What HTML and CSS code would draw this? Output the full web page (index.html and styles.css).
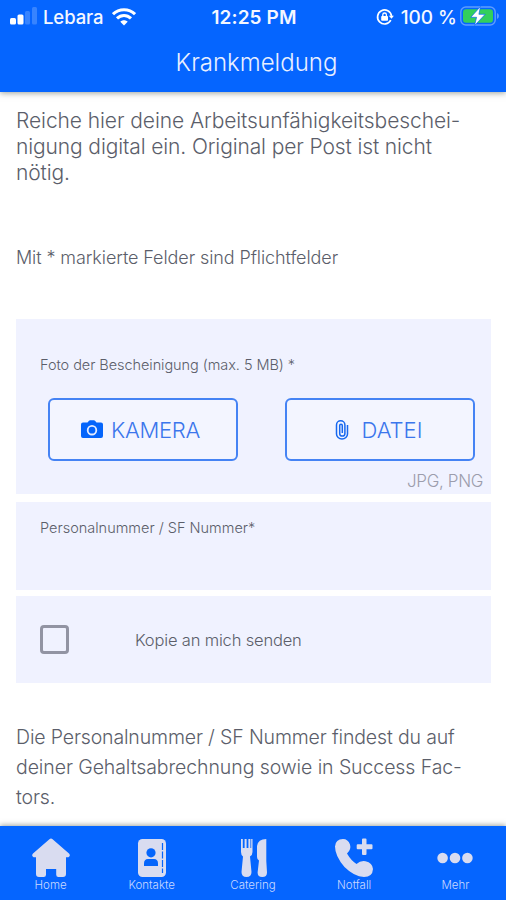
FILE: index.html
```html
<!DOCTYPE html>
<html lang="de">
<head>
<meta charset="utf-8">
<title>Krankmeldung</title>
<link rel="stylesheet" href="styles.css">
</head>
<body>
<div class="app">
  <header class="header">
    <div class="status">
      <div class="status-left">
        <svg class="signal" width="28" height="18" viewBox="0 0 28 18" fill="#fff"><rect x="0" y="11" width="6" height="6.5" rx="1.5"/><rect x="7.5" y="7.5" width="6" height="10" rx="1.5"/><g opacity=".2"><rect x="15" y="4" width="5" height="13.5" rx="1.5"/><rect x="22" y="0" width="5" height="17.5" rx="1.5"/></g></svg>
        <span class="carrier">Lebara</span>
        <svg class="wifi" width="24" height="18" viewBox="0 0 24 18" fill="none" stroke="#fff" stroke-width="3"><path d="M1 6.2C7 .2 17 .2 23 6.2"/><path d="M5 10.4C9 6.5 15 6.5 19 10.4"/><path d="M12 17.6 8.3 13.8C10.3 11.8 13.7 11.8 15.7 13.8Z" fill="#fff" stroke="none"/></svg>
      </div>
      <span class="clock">12:25 PM</span>
      <div class="status-right">
        <svg class="lock" width="18" height="18" viewBox="0 0 18 18" fill="none" stroke="#fff" stroke-width="1.7"><path d="M14.8 12.2A7 7 0 1 1 15.5 8"/><path d="m12.8 7.8 2.7 3 2.4-3Z" fill="#fff" stroke="none"/><rect x="5.2" y="8" width="6.8" height="4.8" rx=".8" fill="#fff" stroke="none"/><path d="M6.8 8V6.8a1.8 1.8 0 0 1 3.6 0V8" stroke-width="1.3"/></svg>
        <span class="percent">100 %</span>
        <svg class="battery" width="39" height="20" viewBox="0 0 39 20"><rect x=".8" y="1" width="34.4" height="18" rx="5" fill="none" stroke="#5e9dff" stroke-width="1.4"/><path d="M37 7v6q2-1 2-3t-2-3Z" fill="#5e9dff"/><rect x="3" y="3.2" width="30" height="13.6" rx="3" fill="#33cf5c"/><path d="M20.5.5 10.8 11.3h5.8L14.6 19.5 25.2 8.3h-6.3Z" fill="#fff" stroke="#0868f8" stroke-width=".7"/></svg>
      </div>
    </div>
    <h1 class="title">Krankmeldung</h1>
  </header>
  <main class="content">
    <p class="intro"><span class="intro-first">Reiche hier deine Arbeitsunfähigkeitsbeschei-</span><span>nigung digital ein. Original per Post ist nicht</span><span>nötig.</span></p>
    <p class="required">Mit * markierte Felder sind Pflichtfelder</p>
    <section class="card upload">
      <p class="label photo-label">Foto der Bescheinigung (max. 5 MB) *</p>
      <div class="buttons">
        <button class="btn camera"><svg width="24" height="20" viewBox="0 0 24 20"><path fill="#0565fb" d="M3 2.6h4.5L9 .7Q9.3.3 10 .3h4q.7 0 1 .4l1.5 1.9H21q2 0 2 2V16q0 2-2 2H3q-2 0-2-2V4.6q0-2 2-2Z"/><circle cx="12" cy="10.2" r="4.3" fill="#0565fb" stroke="#e5ecff" stroke-width="1.8"/></svg><span>KAMERA</span></button>
        <button class="btn file"><svg width="14" height="20" viewBox="0 0 14 20" fill="none" stroke="#1768ef" stroke-width="1.5"><path d="M12.500 5v9a5.500 5 0 0 1-11 0V5a4.200 4.200 0 0 1 8.400 0v8.500a2.600 2.600 0 0 1-5.200 0V5.500a1.300 1.300 0 0 1 2.600 0V13"/></svg><span>DATEI</span></button>
      </div>
      <p class="formats">JPG, PNG</p>
    </section>
    <section class="card number"><p class="label">Personalnummer / SF Nummer*</p></section>
    <section class="card copy"><span class="checkbox"></span><span class="copy-label">Kopie an mich senden</span></section>
    <p class="hint"><span>Die Personalnummer / SF Nummer findest du auf</span><span class="hint-second">deiner Gehaltsabrechnung sowie in Success Fac-</span><span>tors.</span></p>
  </main>
  <nav class="tabs">
    <a class="tab"><svg width="40" height="40" viewBox="0 0 40 40" fill="#d9dcf0"><path d="M18.400 1.200q1.600-1.300 3.200 0L38 15.500q2 2.300-.6 3.800H35V36q0 3-3 3h-4.500q-2.300 0-2.300-2.300V31H15v5.700q0 2.300-2.300 2.300H8q-3 0-3-3V19.300H2.600Q0 17.800 2 15.500Z"/></svg><span>Home</span></a>
    <a class="tab"><svg width="40" height="40" viewBox="0 0 40 40"><rect x="6" y="1" width="28" height="38" rx="4.500" fill="#d9dcf0"/><circle cx="19" cy="14.800" r="4.600" fill="#0565fb"/><path d="M12 28v-2.500q0-4.500 4-4.500h6q4 0 4 4.500V28Z" fill="#0565fb"/><path d="M30.500 5v30" stroke="#0565fb" stroke-width="1.200" stroke-dasharray="7 1.500"/></svg><span>Kontakte</span></a>
    <a class="tab"><svg width="40" height="40" viewBox="0 0 40 40" fill="#d9dcf0"><path d="M8 1h1.800v9h1.800V1h2v9h1.800V1h2v9h.8V1H19.500v13q0 3-2.500 4.500L18.500 34q0 5-5 5t-5-5L10 18.500Q8 17 8 14Z"/><path d="M33.300 1v22l.7 11.500q0 4.500-4.700 4.500t-4.700-4.500L26 22.500q-2-1-2-3.500V8q1-7 9.300-7Z"/></svg><span>Catering</span></a>
    <a class="tab"><svg width="40" height="40" viewBox="0 0 40 40" fill="#d9dcf0"><path d="M9 1q5 0 7 5.500 1.500 5-3 9 4 7 9.500 10.500 4-3.600 9-2.700 7 1.700 7.500 7.700Q38.500 39 30 39 20 38.500 10.500 29 1 18 1 8.500 1.500 1 9 1Z"/><path d="M28 1.500q0-1 1-1h2.500q1 0 1 1v4.700h5q1 0 1 1v3q0 1-1 1h-5v4.700q0 1-1 1H29q-1 0-1-1v-4.700h-4.300q-1 0-1-1v-3q0-1 1-1H28Z"/></svg><span>Notfall</span></a>
    <a class="tab"><svg width="40" height="40" viewBox="0 0 40 40" fill="#d9dcf0"><circle cx="7.600" cy="20" r="5.300"/><circle cx="20" cy="20" r="5.300"/><circle cx="32.400" cy="20" r="5.300"/></svg><span>Mehr</span></a>
  </nav>
</div>
</body>
</html>
```
FILE: styles.css
```css
* { box-sizing: border-box; }
body { margin: 0; background: #fff; font-family: Inter, "Liberation Sans", sans-serif; color: #5b5e6a; font-weight: 300; }
p, h1 { margin: 0; }
span { white-space: nowrap; }
.app { width: 506px; height: 900px; display: flex; flex-direction: column; overflow: hidden; }
.header { height: 92px; flex: none; background: #0565ff; color: #f4f7ff; box-shadow: 0 1px 6px rgba(70, 80, 70, .55); }
.status { height: 34px; display: grid; grid-template-columns: 1fr auto 1fr; align-items: center; padding: 0 7px 0 10px; font-size: 19px; font-weight: 500; }
.status-left, .status-right { display: flex; align-items: center; }
.status-right { justify-content: flex-end; }
.signal { margin-right: 5px; margin-top: -2px; }
.carrier { font-size: 18.5px; letter-spacing: -.1px; }
.wifi { margin-left: 9px; margin-top: -1px; }
.clock { font-weight: 600; letter-spacing: .1px; margin-left: -1px; }
.lock { margin-right: 7px; }
.battery { margin-left: 3px; margin-top: -2px; }
.title { margin-top: 12px; height: 34px; line-height: 34px; font-size: 24px; font-weight: 300; text-align: center; padding-left: 7px; color: #e9efff; }
.content { flex: 1; padding: 16px 15px 0 16px; }
.intro { font-size: 21px; line-height: 26px; letter-spacing: -.12px; }
.intro-first { letter-spacing: -.08px; }
.intro span, .hint span { display: block; }
.required { margin-top: 60px; font-size: 18px; line-height: 24px; letter-spacing: -.09px; }
.card { background: #f0f2ff; }
.upload { margin-top: 49px; height: 175px; padding: 35px 16px 0 24px; }
.label { font-size: 14.5px; line-height: 22px; }
.photo-label { letter-spacing: -.06px; }
.buttons { display: flex; justify-content: space-between; padding-left: 8px; margin-top: 22px; }
.btn { width: 190px; height: 63px; padding: 0; border: 2px solid #4583f4; border-radius: 6px; background: #f3f5ff; color: #3b76ec; font: 300 22px Inter, sans-serif; letter-spacing: -.3px; display: flex; align-items: center; justify-content: center; gap: 7px; }
.camera { padding-right: 6px; }
.file { gap: 13px; letter-spacing: 0; padding-right: 3px; }
.formats { text-align: right; margin: 9px -8px 0 0; font-size: 17px; line-height: 22px; letter-spacing: -.35px; color: #9c9dac; }
.number { margin-top: 8px; height: 88px; padding: 15px 24px; }
.copy { margin-top: 6px; height: 87px; padding: 0 24px; display: flex; align-items: center; }
.checkbox { width: 29px; height: 29px; border: 3px solid #9294a3; border-radius: 4px; margin: 0 66px 1px 0; }
.copy-label { font-size: 16.5px; letter-spacing: -.17px; }
.hint { margin-top: 39px; font-size: 19.5px; line-height: 30px; letter-spacing: -.15px; }
.hint-second { letter-spacing: -.09px; }
.tabs { height: 74px; flex: none; background: #0565ff; box-shadow: 0 -1px 5px rgba(70, 80, 70, .5); display: grid; grid-template-columns: repeat(5, 1fr); padding-top: 12px; }
.tab { display: flex; flex-direction: column; align-items: center; color: #c9d9ff; font-size: 11.5px; line-height: 15px; }
```
